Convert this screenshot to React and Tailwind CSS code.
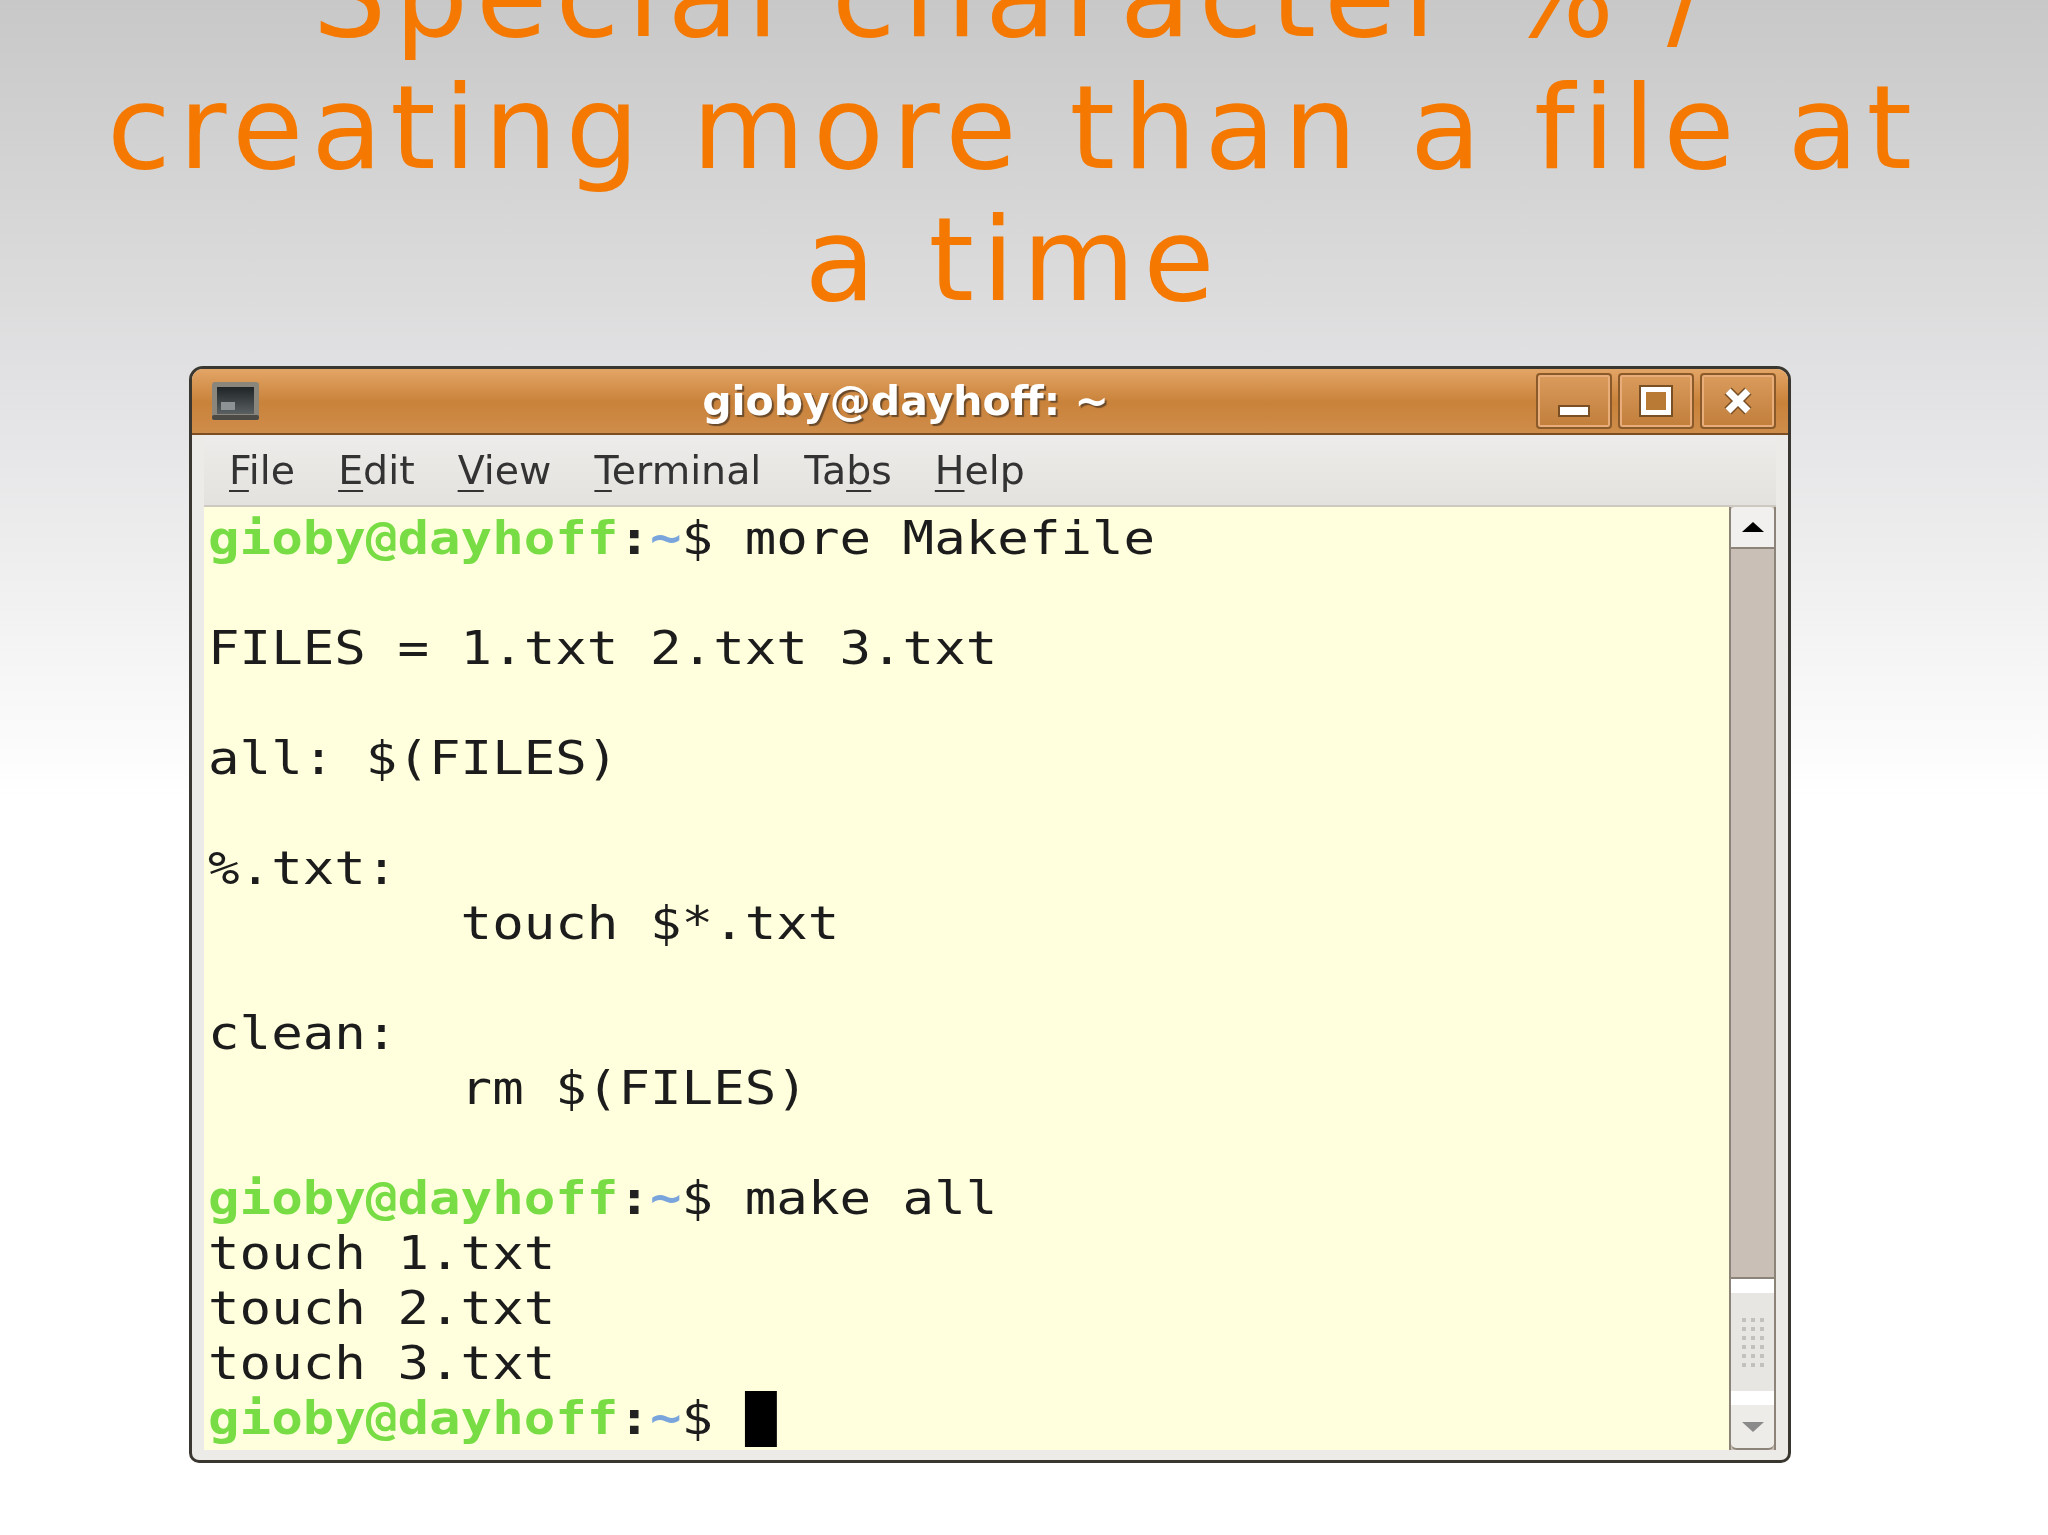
const P = () => (
  <>
    <span className="font-bold text-[#78dc44]">gioby@dayhoff</span>
    <span className="font-bold text-[#222]">:</span>
    <span className="font-bold text-[#7aa5dc]">~</span>
    <span>$ </span>
  </>
);

const lines = [
  <><P />more Makefile</>,
  "",
  "FILES = 1.txt 2.txt 3.txt",
  "",
  "all: $(FILES)",
  "",
  "%.txt:",
  "        touch $*.txt",
  "",
  "clean:",
  "        rm $(FILES)",
  "",
  <><P />make all</>,
  "touch 1.txt",
  "touch 2.txt",
  "touch 3.txt",
  <><P /><span className="inline-block w-[28px] h-[56px] align-top bg-black" /></>,
];

const menu = [
  ["F", "ile"],
  ["E", "dit"],
  ["V", "iew"],
  ["T", "erminal"],
  ["Ta", "b", "s"],
  ["H", "elp"],
];

const WmButton = ({ children }) => (
  <div className="w-[72px] h-[52px] flex items-center justify-center rounded-[2px] border-2 border-[#e8ad78] outline-2 outline-[#8a5a2a] bg-gradient-to-b from-[#d99a5b] to-[#c27f3c]">
    {children}
  </div>
);

export default function App() {
  return (
    <div className="w-[2048px] h-[1535px] overflow-hidden bg-gradient-to-b from-[#c8c8c8] via-[#e4e4e6] via-[27%] to-white to-[52%] flex flex-col items-center">
      <h1 className="w-full mt-[-70px] pr-[21px] text-center font-['DejaVu_Sans',sans-serif] font-normal text-[#f57900] text-[116px] leading-[132px] tracking-[8px]">
        Special character % /<br />creating more than a file at<br />a time
      </h1>

      <div className="ml-[-68px] mt-[40px] w-[1602px] h-[1097px] flex flex-col rounded-t-[14px] rounded-b-[10px] border-[3px] border-[#3a3630] bg-[#edebe8] overflow-hidden">
        <div className="h-[66px] shrink-0 flex items-center pl-[20px] pr-[14px] border-b-2 border-[#7a4f24] bg-gradient-to-b from-[#e3a566] via-[#c98239] via-[52%] to-[#cf8d4b]">
          <svg width="47" height="38" viewBox="0 0 47 38" className="shrink-0">
            <defs>
              <linearGradient id="scr" x1="0" y1="0" x2="0" y2="1">
                <stop offset="0" stopColor="#1f2426" />
                <stop offset="1" stopColor="#5a6062" />
              </linearGradient>
            </defs>
            <rect x="0" y="0" width="47" height="38" rx="3" fill="#8a867c" />
            <rect x="0" y="33" width="47" height="5" rx="2" fill="#4c4a44" />
            <rect x="5" y="5" width="37" height="27" fill="url(#scr)" />
            <rect x="9" y="20" width="14" height="8" fill="#8d9395" />
          </svg>
          <div className="flex-1 pl-[14px] text-center font-['DejaVu_Sans',sans-serif] font-bold text-white text-[41px] leading-none blur-[0.6px] [text-shadow:2px_2px_1px_#6b4a2a]">
            gioby@dayhoff: ~
          </div>
          <div className="flex gap-[10px]">
            <WmButton>
              <div className="w-[32px] h-[12px] mt-[20px] bg-white border-[2px] border-[#7a4f24]" />
            </WmButton>
            <WmButton>
              <div className="w-[30px] h-[28px] border-[5px] border-white outline-2 outline-[#7a4f24] bg-[#b97a36]" />
            </WmButton>
            <WmButton>
              <svg width="30" height="30" viewBox="0 0 30 30">
                <path d="M5 5 L25 25 M25 5 L5 25" stroke="#7a4f24" strokeWidth="10" />
                <path d="M5 5 L25 25 M25 5 L5 25" stroke="#fff" strokeWidth="7" />
              </svg>
            </WmButton>
          </div>
        </div>

        <div className="flex-1 min-h-0 flex flex-col pl-[12px] pr-[12px] pb-[10px]">
          <div className="h-[72px] shrink-0 flex items-center pl-[25px] pt-[2px] gap-[43px] border-b-2 border-[#cdc9c1] bg-gradient-to-b from-[#eeecea] to-[#e4e2de] font-['DejaVu_Sans',sans-serif] text-[39.5px] text-[#333]">
            {menu.map((m) => (
              <span key={m.join("")} className="blur-[0.5px]">
                {m.length === 2 ? (
                  <>
                    <span className="underline decoration-2 underline-offset-[6px]">{m[0]}</span>
                    {m[1]}
                  </>
                ) : (
                  <>
                    {m[0]}
                    <span className="underline decoration-2 underline-offset-[6px]">{m[1]}</span>
                    {m[2]}
                  </>
                )}
              </span>
            ))}
          </div>

          <div className="flex-1 min-h-0 flex">
            <div className="flex-1 min-w-0 overflow-hidden bg-[#ffffdd] pl-[4px] pt-[4px]">
              {lines.map((l, i) => (
                <div
                  key={i}
                  className="h-[55px] leading-[55px] whitespace-pre font-['DejaVu_Sans_Mono',monospace] text-[46px] text-[#1c1c1c] scale-x-[1.14] origin-left blur-[0.6px]"
                >
                  {l}
                </div>
              ))}
            </div>

            <div className="w-[47px] shrink-0 flex flex-col border-x-2 border-[#8c8478] bg-[#c9bfb6]">
              <div className="h-[42px] rounded-t-[4px] bg-[#f2f0ee] flex items-center justify-center border-b-2 border-[#8c8478]">
                <div className="w-0 h-0 border-x-[11px] border-x-transparent border-b-[10px] border-b-black" />
              </div>
              <div className="flex-1" />
              <div className="h-[128px] border-t-2 border-[#8c8478] bg-[#e8e6e3] flex flex-col">
                <div className="h-[14px] bg-white" />
                <div className="flex-1 grid grid-cols-3 content-center justify-center justify-items-center gap-y-[5px] px-[8px]">
                  {Array.from({ length: 18 }).map((_, i) => (
                    <div key={i} className="w-[4px] h-[4px] bg-[#c4c1bc]" />
                  ))}
                </div>
                <div className="h-[14px] bg-white" />
              </div>
              <div className="h-[45px] rounded-b-[6px] bg-[#eeece9] flex items-center justify-center border-b-2 border-[#8c8478]">
                <div className="w-0 h-0 border-x-[11px] border-x-transparent border-t-[10px] border-t-[#8a8a8a]" />
              </div>
            </div>
          </div>
        </div>
      </div>
    </div>
  );
}
